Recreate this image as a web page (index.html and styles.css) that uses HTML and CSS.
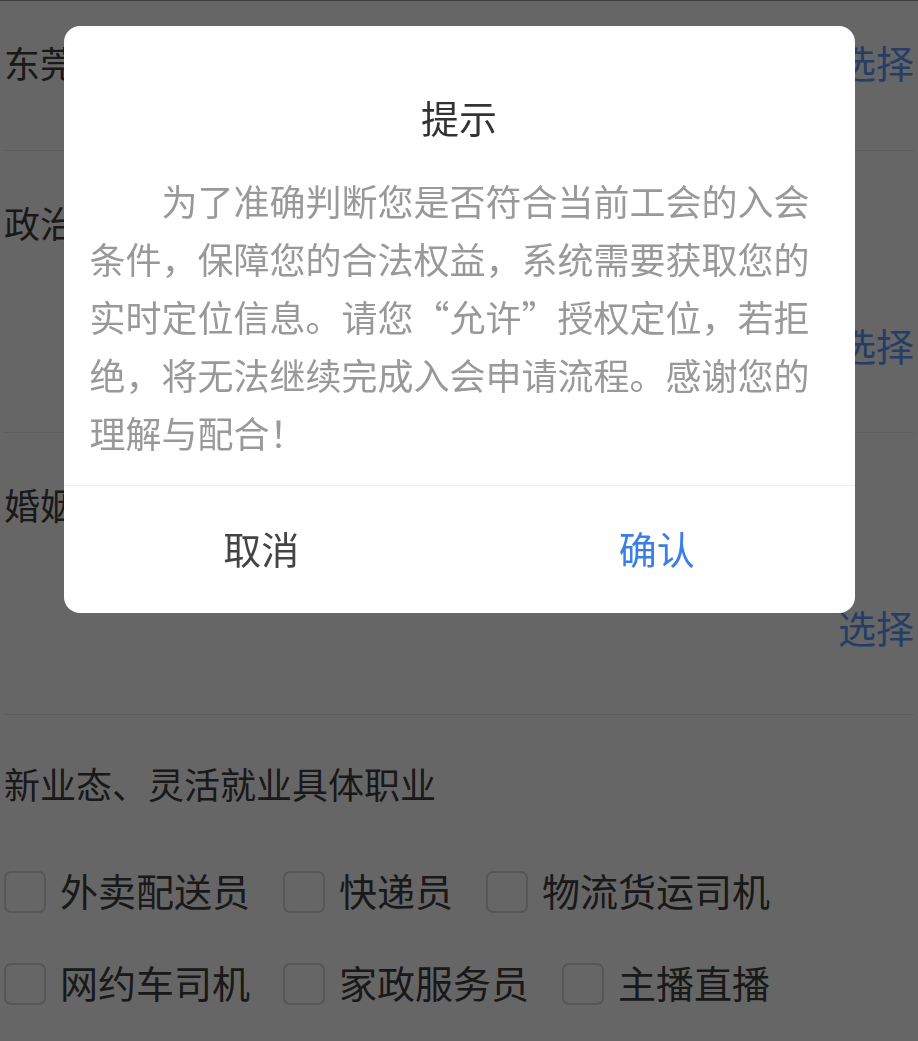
FILE: index.html
```html
<!DOCTYPE html>
<html lang="zh-CN">
<head>
<meta charset="utf-8">
<title>入会申请</title>
<link rel="stylesheet" href="styles.css">
</head>
<body>
<div class="page">
  <div class="row row-inline">
    <span class="label">东莞市所属镇街</span>
    <span class="pick">选择</span>
  </div>
  <div class="row row-stack">
    <div class="label">政治面貌</div>
    <div class="pick">选择</div>
  </div>
  <div class="row row-stack">
    <div class="label">婚姻状况</div>
    <div class="pick">选择</div>
  </div>
  <div class="section">
    <div class="label">新业态、灵活就业具体职业</div>
    <div class="checks">
      <label class="check"><span class="box"></span><span>外卖配送员</span></label>
      <label class="check"><span class="box"></span><span>快递员</span></label>
      <label class="check"><span class="box"></span><span>物流货运司机</span></label>
      <label class="check"><span class="box"></span><span>网约车司机</span></label>
      <label class="check"><span class="box"></span><span>家政服务员</span></label>
      <label class="check"><span class="box"></span><span>主播直播</span></label>
    </div>
  </div>
</div>

<div class="mask">
  <div class="dialog">
    <div class="dialog-title">提示</div>
    <p class="dialog-body">为了准确判断您是否符合当前工会的入会条件，保障您的合法权益，系统需要获取您的实时定位信息。请您“允许”授权定位，若拒绝，将无法继续完成入会申请流程。感谢您的理解与配合！</p>
    <div class="dialog-actions">
      <div class="btn btn-cancel">取消</div>
      <div class="btn btn-ok">确认</div>
    </div>
  </div>
</div>
</body>
</html>
```

FILE: styles.css
```css
html, body {
  margin: 0;
  padding: 0;
}
body {
  width: 918px;
  height: 1041px;
  overflow: hidden;
  background: #ffffff;
  font-family: "Noto Sans CJK SC", "Noto Sans", sans-serif;
  color: #404040;
}
.page {
  border-top: 1px solid #999999;
  padding: 0 4px;
}
.label {
  font-size: 36px;
  line-height: 40px;
  white-space: nowrap;
}
.pick {
  font-size: 38px;
  line-height: 40px;
  color: #5a9cff;
  text-align: right;
}
.row {
  border-bottom: 1px solid #ebebeb;
}
.row-inline {
  display: flex;
  justify-content: space-between;
  align-items: center;
  padding: 41px 0 68px;
}
.row-stack {
  padding: 51px 0 67px;
}
.row-stack .pick {
  margin-top: 83px;
}
.section {
  padding-top: 48px;
}
.checks {
  margin-top: 68px;
  display: flex;
  flex-wrap: wrap;
  row-gap: 50px;
  column-gap: 33px;
}
.check {
  display: flex;
  align-items: center;
  gap: 14px;
  font-size: 38px;
  line-height: 42px;
}
.check span:last-child {
  position: relative;
  top: -2px;
}
.box {
  box-sizing: border-box;
  width: 42px;
  height: 42px;
  border: 2px solid #d6d6d6;
  border-radius: 7px;
  background: #ffffff;
}
.mask {
  position: fixed;
  inset: 0;
  background: rgba(0, 0, 0, 0.6);
  display: flex;
  justify-content: center;
  align-items: flex-start;
  padding-top: 26px;
  box-sizing: border-box;
}
.dialog {
  width: 791px;
  background: #ffffff;
  border-radius: 16px;
  overflow: hidden;
}
.dialog-title {
  padding-top: 66px;
  font-size: 38px;
  line-height: 50px;
  color: #333333;
  text-align: center;
}
.dialog-body {
  margin: 29px 0 0;
  padding: 0 26px 24px;
  font-size: 36px;
  line-height: 58px;
  text-indent: 2em;
  color: #999999;
}
.dialog-actions {
  display: flex;
  height: 123px;
  padding-bottom: 4px;
  border-top: 1px solid #eeeeee;
}
.btn {
  flex: 1;
  display: flex;
  align-items: center;
  justify-content: center;
  font-size: 38px;
}
.btn-cancel {
  color: #444444;
}
.btn-ok {
  color: #3a7ee6;
}
```
